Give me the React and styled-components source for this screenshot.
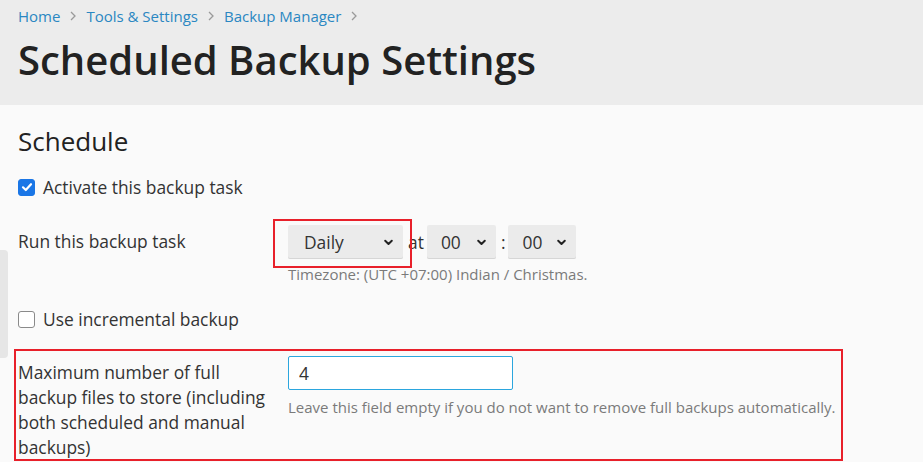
import React from 'react';
import styled, { createGlobalStyle } from 'styled-components';

const GlobalStyle = createGlobalStyle`
  html, body {
    margin: 0;
    padding: 0;
    background: #ffffff;
    font-family: "Open Sans", "Liberation Sans", sans-serif;
  }
`;

const Page = styled.div`
  width: 923px;
  position: relative;
`;

/* Grey handle at the left edge */
const SideHandle = styled.div`
  position: absolute;
  left: 0;
  top: 250px;
  width: 8px;
  height: 108px;
  background: #e6e6e6;
  border-radius: 0 4px 4px 0;
`;

const Header = styled.div`
  background: #ececec;
  height: 105px;
  box-sizing: border-box;
  padding: 5px 18px 0;
`;

const Breadcrumbs = styled.nav`
  display: flex;
  align-items: center;
  gap: 9px;
  font-size: 15px;
  line-height: 22px;
`;

const Crumb = styled.a`
  color: #2a87c2;
  text-decoration: none;
`;

const Sep = styled.span`
  display: flex;
  align-items: center;
  color: #9a9a9a;
`;

const Title = styled.h1`
  margin: 7px 0 0;
  font-size: 40px;
  font-weight: 600;
  line-height: 52px;
  color: #222222;
`;

const Content = styled.div`
  background: #fafafa;
  height: 357px;
  box-sizing: border-box;
  padding: 19px 18px 0;
`;

const SectionTitle = styled.h2`
  margin: 0;
  font-size: 26px;
  font-weight: 500;
  line-height: 34px;
  color: #222222;
`;

const CheckRow = styled.label`
  display: flex;
  align-items: center;
  gap: 8px;
  margin-top: ${(p) => p.$top}px;
  font-size: 17.4px;
  color: #333333;
  line-height: 22px;
`;

const Box = styled.span`
  width: 17px;
  height: 17px;
  box-sizing: border-box;
  border-radius: 3px;
  display: flex;
  align-items: center;
  justify-content: center;
  background: ${(p) => (p.$checked ? '#1a76e6' : '#ffffff')};
  border: 1px solid ${(p) => (p.$checked ? '#1a76e6' : '#8a8a8a')};
`;

const FormRow = styled.div`
  position: relative;
  display: grid;
  grid-template-columns: 270px 1fr;
  margin-top: ${(p) => p.$top}px;
`;

const Label = styled.div`
  font-size: 17.4px;
  line-height: 25px;
  color: #333333;
  padding-top: ${(p) => p.$pad || 0}px;
  padding-right: 14px;
`;

const Controls = styled.div`
  display: flex;
  align-items: center;
`;

const Field = styled.div`
  display: flex;
  flex-direction: column;
`;

const SelectWrap = styled.div`
  position: relative;
`;

const SelectBox = styled.div`
  width: ${(p) => p.$w}px;
  height: 34px;
  box-sizing: border-box;
  background: #ebebeb;
  border-radius: 2px;
  box-shadow: inset 0 -1px 0 #d6d6d6;
  display: flex;
  align-items: center;
  justify-content: space-between;
  padding: 0 9px 0 ${(p) => p.$pl}px;
  font-size: 17.4px;
  color: #333333;
`;

const Highlight = styled.div`
  position: absolute;
  border: 2px solid #e8202a;
  pointer-events: none;
  top: ${(p) => p.$t}px;
  left: ${(p) => p.$l}px;
  right: ${(p) => p.$r}px;
  bottom: ${(p) => p.$b}px;
`;

const Word = styled.span`
  font-size: 17.4px;
  color: #333333;
  margin: 0 ${(p) => p.$mr}px 0 ${(p) => p.$ml}px;
`;

const Hint = styled.div`
  margin-top: ${(p) => p.$top}px;
  font-size: 15px;
  line-height: 20px;
  color: #7a7a7a;
`;

const TextInput = styled.input`
  width: 225px;
  height: 34px;
  box-sizing: border-box;
  border: 1px solid #2ba6de;
  border-radius: 2px;
  background: #ffffff;
  padding: 0 10px;
  font-family: inherit;
  font-size: 17.4px;
  color: #333333;
  outline: none;
`;

const Chevron = ({ size = 11, color = '#222' }) => (
  <svg width={size} height={size} viewBox="0 0 10 10">
    <path d="M2 3.4 L5 6.4 L8 3.4" fill="none" stroke={color} strokeWidth="1.8" strokeLinecap="round" strokeLinejoin="round" />
  </svg>
);

const CrumbChevron = () => (
  <svg width="8" height="10" viewBox="0 0 8 10">
    <path d="M2 1 L6 5 L2 9" fill="none" stroke="#9a9a9a" strokeWidth="1.3" />
  </svg>
);

const Tick = () => (
  <svg width="12" height="12" viewBox="0 0 12 12">
    <path d="M2 6.3 L4.8 9 L10 3.2" fill="none" stroke="#fff" strokeWidth="2.2" strokeLinecap="round" strokeLinejoin="round" />
  </svg>
);

const Select = ({ value, width, pad = 16 }) => (
  <SelectBox $w={width} $pl={pad}>
    <span>{value}</span>
    <Chevron />
  </SelectBox>
);

export default function App() {
  return (
    <Page>
      <GlobalStyle />
      <SideHandle />
      <Header>
        <Breadcrumbs>
          <Crumb>Home</Crumb>
          <Sep><CrumbChevron /></Sep>
          <Crumb>Tools &amp; Settings</Crumb>
          <Sep><CrumbChevron /></Sep>
          <Crumb>Backup Manager</Crumb>
          <Sep><CrumbChevron /></Sep>
        </Breadcrumbs>
        <Title>Scheduled Backup Settings</Title>
      </Header>
      <Content>
        <SectionTitle>Schedule</SectionTitle>
        <CheckRow $top={18}>
          <Box $checked><Tick /></Box>
          Activate this backup task
        </CheckRow>
        <FormRow $top={27}>
          <Label $pad={4}>Run this backup task</Label>
          <Field>
            <Controls>
              <SelectWrap>
                <Select value="Daily" width={115} />
                <Highlight $t={-6} $l={-15} $r={-9} $b={-9} />
              </SelectWrap>
              <Word $ml={5} $mr={3}>at</Word>
              <Select value="00" width={69} pad={14} />
              <Word $ml={5} $mr={3}>:</Word>
              <Select value="00" width={68} pad={14} />
            </Controls>
            <Hint $top={5}>Timezone: (UTC +07:00) Indian / Christmas.</Hint>
          </Field>
        </FormRow>
        <CheckRow $top={24}>
          <Box />
          Use incremental backup
        </CheckRow>
        <FormRow $top={26}>
          <Label $pad={4}>Maximum number of full backup files to store (including both scheduled and manual backups)</Label>
          <Field>
            <TextInput defaultValue="4" />
            <Hint $top={7}>Leave this field empty if you do not want to remove full backups automatically.</Hint>
          </Field>
          <Highlight $t={-7} $l={-4} $r={62} $b={-1} />
        </FormRow>
      </Content>
    </Page>
  );
}
